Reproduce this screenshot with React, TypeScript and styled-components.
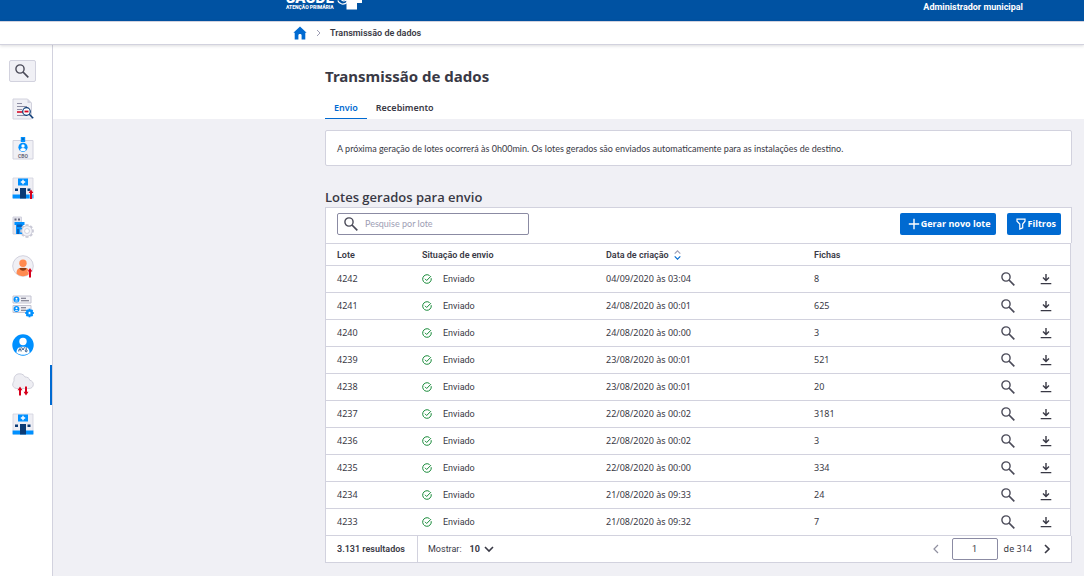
import React from "react";
import styled, { createGlobalStyle } from "styled-components";

const c = {
  header: "#0052a2",
  primary: "#006ad1",
  text: "#393945",
  muted: "#9e9eb4",
  line: "#d2d2de",
  field: "#8b8ba3",
  bg: "#f0f0f5",
  green: "#178a38",
  red: "#d6001c",
  sky: "#0090ff",
  navy: "#0b3b75",
};

const wide = `"Noto Sans", "Open Sans", sans-serif`;

const GlobalStyle = createGlobalStyle`
  *, *::before, *::after { box-sizing: border-box; }
  body {
    margin: 0;
    background: ${c.bg};
    color: ${c.text};
    font-family: Roboto, "Noto Sans", sans-serif;
    font-size: 9px;
    line-height: 12px;
  }
  button, input, select { font: inherit; color: inherit; }
  h1, h2, p, ul { margin: 0; padding: 0; }
`;

const Page = styled.div`
  display: flex;
  flex-direction: column;
  min-height: 100vh;
`;

const TopBar = styled.header`
  display: flex;
  justify-content: space-between;
  align-items: flex-end;
  height: 21px;
  padding: 0 61px 8px 286px;
  overflow: hidden;
  background: ${c.header};
  color: #fff;
`;

const Brand = styled.div`
  display: flex;
  align-items: flex-end;
  gap: 3px;
  padding-bottom: 3px;
`;

const BrandName = styled.div`
  display: flex;
  flex-direction: column;
  font-weight: 800;
`;

const BrandTitle = styled.span`
  font-family: Inter, sans-serif;
  font-size: 14px;
  line-height: 12px;
`;

const BrandSub = styled.span`
  font-size: 5px;
  line-height: 6px;
`;

const BrandMark = styled.svg`
  display: block;
`;

const Profile = styled.div`
  font-weight: 700;
`;

const Breadcrumb = styled.nav`
  position: relative;
  display: flex;
  align-items: center;
  height: 24px;
  padding-left: 293px;
  background: #fff;
  border-top: 1px solid ${c.line};
  border-bottom: 1px solid ${c.line};
  box-shadow: 0 1px 3px rgba(57, 57, 69, 0.18);
  font-weight: 600;
`;

const HomeLink = styled.a`
  display: flex;
  margin-right: 9px;
`;

const Crumb = styled.span`
  margin-left: 4px;
`;

const Body = styled.div`
  display: flex;
  flex: 1;
`;

const Sidebar = styled.aside`
  flex: 0 0 53px;
  padding-top: 15px;
  background: #fff;
  border-right: 1px solid ${c.line};
`;

const SearchToggle = styled.button`
  display: flex;
  align-items: center;
  justify-content: center;
  width: 27px;
  height: 22px;
  margin: 0 0 8px 9px;
  padding: 0 2px 0 0;
  background: ${c.bg};
  border: 1px solid ${c.line};
  border-radius: 2px;
`;

const Menu = styled.ul`
  display: grid;
  grid-auto-rows: 1fr;
  height: 354px;
  list-style: none;
`;

const MenuItem = styled.li<{ $active?: boolean }>`
  display: flex;
  align-items: center;
  padding-left: 12px;
  border-right: 2px solid ${(p) => (p.$active ? c.primary : "transparent")};
`;

const MenuLink = styled.a`
  display: flex;
`;

const Main = styled.main`
  flex: 1;
  min-width: 0;
`;

const Heading = styled.div`
  padding: 20px 12px 0 272px;
  background: #fff;
`;

const Title = styled.h1`
  font-family: ${wide};
  font-size: 15px;
  line-height: 22px;
  font-weight: 700;
`;

const Tabs = styled.div`
  display: flex;
  margin-top: 10px;
`;

const Tab = styled.button<{ $active?: boolean }>`
  height: 22px;
  padding: 0 9px;
  background: none;
  border: 0;
  border-bottom: 1px solid ${(p) => (p.$active ? c.primary : "transparent")};
  color: ${(p) => (p.$active ? c.primary : c.text)};
  font-family: ${wide};
  font-weight: 600;
`;

const Content = styled.div`
  padding: 11px 12px 14px 272px;
`;

const Notice = styled.p`
  padding: 12px 11px 10px;
  background: #fff;
  border: 1px solid ${c.line};
  border-radius: 2px;
  font-family: Lato, sans-serif;
`;

const SectionTitle = styled.h2`
  margin-top: 22px;
  padding-bottom: 1px;
  font-family: "Open Sans", sans-serif;
  font-size: 13px;
  line-height: 18px;
  font-weight: 600;
`;

const Toolbar = styled.div`
  display: flex;
  align-items: center;
  gap: 11px;
  height: 36px;
  padding: 0 10px 4px 11px;
  background: #fff;
  border: 1px solid ${c.line};
  border-bottom: 0;
`;

const SearchField = styled.label`
  display: flex;
  align-items: center;
  gap: 7px;
  width: 192px;
  height: 22px;
  margin-right: auto;
  padding: 0 6px;
  border: 1px solid ${c.field};
  border-radius: 2px;
`;

const SearchInput = styled.input`
  flex: 1;
  min-width: 0;
  padding: 0;
  border: 0;
  outline: 0;
  background: none;
  font-family: Lato, sans-serif;
  &::placeholder { color: ${c.muted}; opacity: 1; }
`;

const PrimaryButton = styled.button`
  display: flex;
  align-items: center;
  gap: 1px;
  height: 22px;
  padding: 0 5px 0 8px;
  background: ${c.primary};
  color: #fff;
  border: 0;
  border-radius: 2px;
  font-family: "Open Sans", sans-serif;
  font-weight: 700;
  white-space: nowrap;
`;

const TableWrap = styled.div`
  margin-right: 1px;
  background: #fff;
  border: solid ${c.line};
  border-width: 1px 1px 0 1px;
`;

const Table = styled.table`
  width: 100%;
  table-layout: fixed;
  border-collapse: collapse;
`;

const Row = styled.tr`
  border-bottom: 1px solid ${c.line};
`;

const HeadCell = styled.th<{ $width?: number }>`
  width: ${(p) => (p.$width ? `${p.$width}px` : "auto")};
  height: 21px;
  padding: 1px 0 0 11px;
  text-align: left;
  font-weight: 600;
`;

const SortButton = styled.button`
  display: flex;
  align-items: center;
  gap: 5px;
  padding: 0;
  border: 0;
  background: none;
  font-weight: 600;
`;

const Cell = styled.td<{ $numeric?: boolean }>`
  height: 27px;
  padding: 0 0 0 11px;
  font-family: ${(p) => (p.$numeric ? wide : "inherit")};
`;

const Status = styled.span`
  display: flex;
  align-items: center;
  gap: 11px;
`;

const Actions = styled.div`
  display: flex;
  justify-content: flex-end;
  gap: 22px;
  padding-right: 16px;
`;

const IconButton = styled.button`
  display: flex;
  align-items: center;
  justify-content: center;
  width: 16px;
  height: 16px;
  padding: 0;
  border: 0;
  background: none;
`;

const Footer = styled.div`
  display: flex;
  align-items: center;
  height: 27px;
  padding-right: 16px;
  background: #fff;
  border: 1px solid ${c.line};
  border-top: 0;
`;

const Total = styled.strong`
  display: flex;
  align-items: center;
  align-self: stretch;
  width: 92px;
  padding-left: 11px;
  border-right: 1px solid ${c.line};
  font-weight: 600;
`;

const PageSize = styled.label`
  display: flex;
  align-items: center;
  gap: 8px;
  margin: 0 auto 0 10px;
`;

const SelectBox = styled.span`
  display: flex;
  align-items: center;
  gap: 2px;
`;

const PageSelect = styled.select`
  width: 12px;
  padding: 0;
  border: 0;
  appearance: none;
  background: none;
  font-weight: 700;
`;

const PageInput = styled.input`
  width: 46px;
  height: 22px;
  margin: 0 6px 0 8px;
  padding: 0;
  text-align: center;
  background: #fff;
  border: 1px solid ${c.field};
  border-radius: 2px;
`;

const PageCount = styled.span`
  margin-right: 7px;
  font-family: ${wide};
`;

const Magnifier = () => (
  <svg width="14" height="14" viewBox="0 0 14 14" fill="none" stroke="#4a4a58">
    <circle cx="5" cy="5" r="4.1" strokeWidth="1.4" />
    <path d="M8 8l5.3 5.3" strokeWidth="1.700" />
  </svg>
);

const Download = () => (
  <svg width="12" height="12" viewBox="0 0 12 12" fill="none" stroke={c.text} strokeWidth="1.4">
    <path d="M6 1v6.500M3 4.600L6 7.600l3-3M.7 10.600h10.600" />
  </svg>
);

const CheckCircle = () => (
  <svg width="10" height="10" viewBox="0 0 10 10" fill="none" stroke={c.green} strokeWidth="1">
    <path d="M9.200 4.200A4.300 4.300 0 1 1 7.600 1.600" />
    <path d="M3 4.800l1.700 1.700 4.300-4.400" />
  </svg>
);

const Chevron = ({ d, color = c.text, width = 1.6 }: { d: string; color?: string; width?: number }) => (
  <svg width="10" height="10" viewBox="0 0 10 10" fill="none" stroke={color} strokeWidth={width}>
    <path d={d} />
  </svg>
);

const RedArrow = ({ x, y }: { x: number; y: number }) => (
  <path
    transform={`translate(${x} ${y})`}
    d="M-.4 3.600L2 0l2.400 3.600H3V9.500H1V3.600z"
    fill={c.red}
    stroke="#fff"
    strokeWidth=".6"
    paintOrder="stroke"
  />
);

const Hospital = ({ arrow }: { arrow?: boolean }) => (
  <>
    <path d="M1 1h20v20H1z" fill="#eeeef4" stroke={c.line} strokeWidth=".8" />
    <path d="M.6 17.500h20.800v4H.6z" fill={c.sky} />
    <path d="M6 1.500h10v7H6z" fill={c.sky} />
    <path d="M11 2.800v4.400M8.800 5h4.400" stroke="#fff" strokeWidth="1.400" />
    <path d="M8 11h6v10.500H8z" fill={c.navy} />
    <path d="M3 11.500h3v2.600H3zM15.500 11.500h3v2.600h-3z" fill={c.navy} />
    {arrow && <RedArrow x={17} y={12.500} />}
  </>
);

const GearShape = ({ x, y, r, fill, stroke }: { x: number; y: number; r: number; fill: string; stroke: string }) => (
  <g transform={`translate(${x} ${y})`}>
    {[0, 45, 90, 135].map((a) => (
      <rect key={a} x={-r * 0.22} y={-r} width={r * 0.44} height={r * 2} transform={`rotate(${a})`} fill={stroke} />
    ))}
    <circle r={r * 0.76} fill={fill} stroke={stroke} strokeWidth=".8" />
    <circle r={r * 0.36} fill="#fff" stroke={stroke} strokeWidth=".8" />
  </g>
);

const menu: { label: string; active?: boolean; art: React.ReactNode }[] = [
  {
    label: "Relatórios",
    art: (
      <>
        <path d="M1 1h14.500l4 4v16H1z" fill="#f0f0f5" stroke={c.line} />
        <path d="M15.500 1v4h4z" fill={c.line} />
        <path d="M5 5.500h5M5 8.500h10M5 11.500h5M5 17.500h10" stroke="#8e8ea3" strokeWidth="1.100" />
        <path d="M5 14h6" stroke={c.red} strokeWidth="1.500" />
        <circle cx="14.500" cy="13.500" r="3.800" fill="#fff" stroke={c.navy} strokeWidth="1.200" />
        <path d="M12.500 13.500h4" stroke={c.red} strokeWidth="1.800" />
        <path d="M17.300 16.300l3.900 3.900" stroke={c.navy} strokeWidth="1.500" />
      </>
    ),
  },
  {
    label: "CBO",
    art: (
      <>
        <path d="M1 3.500h20V22H1z" fill="#f0f0f5" stroke={c.line} />
        <path d="M8.800 0h4.400v5H8.800z" fill={c.sky} />
        <path d="M10 2h2" stroke={c.navy} strokeWidth=".8" />
        <circle cx="11" cy="10.300" r="4.600" fill={c.sky} />
        <circle cx="11" cy="9" r="1.700" fill="#fff" />
        <path d="M8 13.200c.4-3 5.600-3 6 0-1.500 1.500-4.500 1.500-6 0z" fill="#fff" />
        <text x="11" y="20.500" textAnchor="middle" fontSize="5" fontWeight="700" fill="#68687c">CBO</text>
      </>
    ),
  },
  { label: "Transferência de unidade", art: <Hospital arrow /> },
  {
    label: "Configurações da unidade",
    art: (
      <>
        <path d="M1 1h8.500v17H1z" fill="#e4e4ec" stroke={c.line} />
        <path d="M2.500 2.500h2v2h-2zM6 2.500h2v2H6z" fill="#68687c" />
        <path d="M2.500 6h10v3h-1.500v9H4V9H2.500z" fill={c.sky} />
        <path d="M5 8.500h5v2.500H5zM5 13h2v5H5z" fill="#0a5fb8" />
        <GearShape x={15} y={15} r={6.800} fill="#f3f3f8" stroke="#c9c9d6" />
      </>
    ),
  },
  {
    label: "Exportação de cidadãos",
    art: (
      <>
        <circle cx="11" cy="11" r="10.300" fill="#f0f0f5" stroke={c.line} />
        <path d="M4.500 18.500C4.500 13.500 7 12.800 11 12.800s6.500.7 6.500 5.700c-3.800 3.500-9.200 3.500-13 0z" fill="#ff8a50" />
        <path d="M7.500 13h7c-.5 3.600-6.500 3.600-7 0z" fill="#8a3b12" />
        <circle cx="11" cy="8.200" r="3.700" fill="#ff8a50" />
        <RedArrow x={16} y={13} />
      </>
    ),
  },
  {
    label: "Gestão de cadastros",
    art: (
      <>
        <path d="M1 1h18v7H1zM1 10.500h18v7H1z" fill="#f0f0f5" stroke="#c4c4d2" />
        <circle cx="4.500" cy="4.500" r="2.900" fill={c.sky} />
        <circle cx="4.500" cy="14" r="2.900" fill={c.sky} />
        <circle cx="4.500" cy="3.800" r="1" fill="#fff" />
        <circle cx="4.500" cy="13.300" r="1" fill="#fff" />
        <path d="M3.200 6h2.600M3.200 15.500h2.600" stroke="#fff" strokeWidth=".8" />
        <path d="M9 3.300h5M9 5.800h8M9 12.800h5M9 15.300h5" stroke="#68687c" strokeWidth="1.100" />
        <GearShape x={17.500} y={18} r={4.300} fill={c.sky} stroke={c.sky} />
      </>
    ),
  },
  {
    label: "Profissionais",
    art: (
      <>
        <circle cx="11" cy="11" r="10.700" fill={c.sky} />
        <circle cx="11" cy="7.500" r="3.700" fill="#fff" />
        <path d="M4.500 18.800c0-5 2.500-6 6.500-6s6.500 1 6.500 6c-4 2.700-9 2.700-13 0z" fill="#fff" />
        <path d="M8 13.200v2.300M6.800 17.500v-1.800h2.300v1.800M9.500 13.200l1.500 2.800 1.500-2.800M14.200 13.200v2.500" stroke={c.navy} fill="none" strokeWidth=".8" />
        <circle cx="14.200" cy="16.800" r="1" fill="none" stroke={c.navy} strokeWidth=".8" />
      </>
    ),
  },
  {
    label: "Transmissão de dados",
    active: true,
    art: (
      <>
        <path d="M4.500 15.500C1.500 15 .3 12.800.8 10.800 1.200 9 2 8.500 2 7.500 1.600 3.500 4 .8 7.500.8c3 0 4.500 1.400 5.500 3.200 2.500 0 4.300 1 4.700 3.200 2.500.5 3.800 2.500 3.600 4.500-.2 2.300-1.800 3.800-4.300 3.800z" fill="#eeeef3" stroke="#cfcfda" />
        <path d="M5.500 17.200L8 13.500l2.500 3.700H9V22.500H7v-5.300zM11.500 18.800L14 22.500l2.500-3.700H15v-5.300h-2v5.300z" fill={c.red} stroke="#fff" strokeWidth=".6" paintOrder="stroke" />
      </>
    ),
  },
  { label: "Unidade de saúde", art: <Hospital /> },
];

const rows = [
  ["4242", "04/09/2020 às 03:04", "8"],
  ["4241", "24/08/2020 às 00:01", "625"],
  ["4240", "24/08/2020 às 00:00", "3"],
  ["4239", "23/08/2020 às 00:01", "521"],
  ["4238", "23/08/2020 às 00:01", "20"],
  ["4237", "22/08/2020 às 00:02", "3181"],
  ["4236", "22/08/2020 às 00:02", "3"],
  ["4235", "22/08/2020 às 00:00", "334"],
  ["4234", "21/08/2020 às 09:33", "24"],
  ["4233", "21/08/2020 às 09:32", "7"],
];

export default function App() {
  return (
    <>
      <GlobalStyle />
      <Page>
        <TopBar>
          <Brand>
            <BrandName>
              <BrandTitle>SAÚDE</BrandTitle>
              <BrandSub>ATENÇÃO PRIMÁRIA</BrandSub>
            </BrandName>
            <BrandMark width="26" height="11" viewBox="0 0 26 11">
              <path d="M9 0h16v4h-5v6.500H9.500V5z" fill="#fff" />
              <path d="M.8 1.500c1.500 4 6 4.800 9.500 1.800" fill="none" stroke="#fff" strokeWidth="1.200" />
              <path d="M4 0c1 2.200 4 2.500 6 .6" fill="none" stroke="#fff" strokeWidth="1.200" />
            </BrandMark>
          </Brand>
          <Profile>Administrador municipal</Profile>
        </TopBar>

        <Breadcrumb aria-label="Trilha">
          <HomeLink href="#inicio" aria-label="Início">
            <svg width="14" height="14" viewBox="0 0 14 14">
              <path d="M7 .5L.4 6.700h1.300v6.800h3.700V9.300c0-1.800 3.200-1.800 3.200 0v4.200h3.700V6.700h1.300z" fill={c.primary} />
            </svg>
          </HomeLink>
          <Chevron d="M1 2l3 3-3 3" color={c.muted} width={1} />
          <Crumb>Transmissão de dados</Crumb>
        </Breadcrumb>

        <Body>
          <Sidebar>
            <SearchToggle aria-label="Pesquisar">
              <Magnifier />
            </SearchToggle>
            <Menu>
              {menu.map((item) => (
                <MenuItem key={item.label} $active={item.active}>
                  <MenuLink href="#menu" aria-label={item.label}>
                    <svg width="22" height="23" viewBox="0 0 22 23">{item.art}</svg>
                  </MenuLink>
                </MenuItem>
              ))}
            </Menu>
          </Sidebar>

          <Main>
            <Heading>
              <Title>Transmissão de dados</Title>
              <Tabs role="tablist">
                <Tab role="tab" aria-selected="true" $active>Envio</Tab>
                <Tab role="tab" aria-selected="false">Recebimento</Tab>
              </Tabs>
            </Heading>

            <Content>
              <Notice>
                A próxima geração de lotes ocorrerá às 0h00min. Os lotes gerados são enviados automaticamente para as
                instalações de destino.
              </Notice>

              <SectionTitle>Lotes gerados para envio</SectionTitle>
              <Toolbar>
                <SearchField>
                  <Magnifier />
                  <SearchInput placeholder="Pesquise por lote" aria-label="Pesquise por lote" />
                </SearchField>
                <PrimaryButton>
                  <svg width="12" height="12" viewBox="0 0 12 12" stroke="#fff" strokeWidth="1.400">
                    <path d="M6 .8v10.400M.8 6h10.400" />
                  </svg>
                  Gerar novo lote
                </PrimaryButton>
                <PrimaryButton>
                  <svg width="12" height="12" viewBox="0 0 12 12" fill="none" stroke="#fff" strokeWidth="1.200">
                    <path d="M2 1.200h8v2L7.700 6v3.800L4.800 11V6L2 3.200z" />
                  </svg>
                  Filtros
                </PrimaryButton>
              </Toolbar>

              <TableWrap>
                <Table>
                  <thead>
                    <Row>
                      <HeadCell $width={85}>Lote</HeadCell>
                      <HeadCell $width={184}>Situação de envio</HeadCell>
                      <HeadCell $width={208}>
                        <SortButton>
                          Data de criação
                          <svg width="7" height="10" viewBox="0 0 7 10" fill="none" strokeWidth="1.100">
                            <path d="M.7 3.700L3.500.9l2.800 2.800" stroke={c.muted} />
                            <path d="M.7 6.300l2.800 2.800 2.800-2.800" stroke={c.primary} />
                          </svg>
                        </SortButton>
                      </HeadCell>
                      <HeadCell $width={100}>Fichas</HeadCell>
                      <HeadCell aria-label="Ações" />
                    </Row>
                  </thead>
                  <tbody>
                    {rows.map(([lote, data, fichas]) => (
                      <Row key={lote}>
                        <Cell $numeric>{lote}</Cell>
                        <Cell>
                          <Status>
                            <CheckCircle />
                            Enviado
                          </Status>
                        </Cell>
                        <Cell $numeric>{data}</Cell>
                        <Cell $numeric>{fichas}</Cell>
                        <Cell>
                          <Actions>
                            <IconButton aria-label={`Visualizar lote ${lote}`}>
                              <Magnifier />
                            </IconButton>
                            <IconButton aria-label={`Baixar lote ${lote}`}>
                              <Download />
                            </IconButton>
                          </Actions>
                        </Cell>
                      </Row>
                    ))}
                  </tbody>
                </Table>
              </TableWrap>

              <Footer>
                <Total>3.131 resultados</Total>
                <PageSize>
                  Mostrar:
                  <SelectBox>
                    <PageSelect defaultValue="10">
                      <option>10</option>
                      <option>20</option>
                      <option>50</option>
                    </PageSelect>
                    <Chevron d="M1 3l4 4 4-4" />
                  </SelectBox>
                </PageSize>
                <IconButton aria-label="Página anterior">
                  <Chevron d="M7 1L3 5l4 4" color="#9090a0" width={1.200} />
                </IconButton>
                <PageInput defaultValue="1" aria-label="Página" />
                <PageCount>de 314</PageCount>
                <IconButton aria-label="Próxima página">
                  <Chevron d="M3 1l4 4-4 4" />
                </IconButton>
              </Footer>
            </Content>
          </Main>
        </Body>
      </Page>
    </>
  );
}
